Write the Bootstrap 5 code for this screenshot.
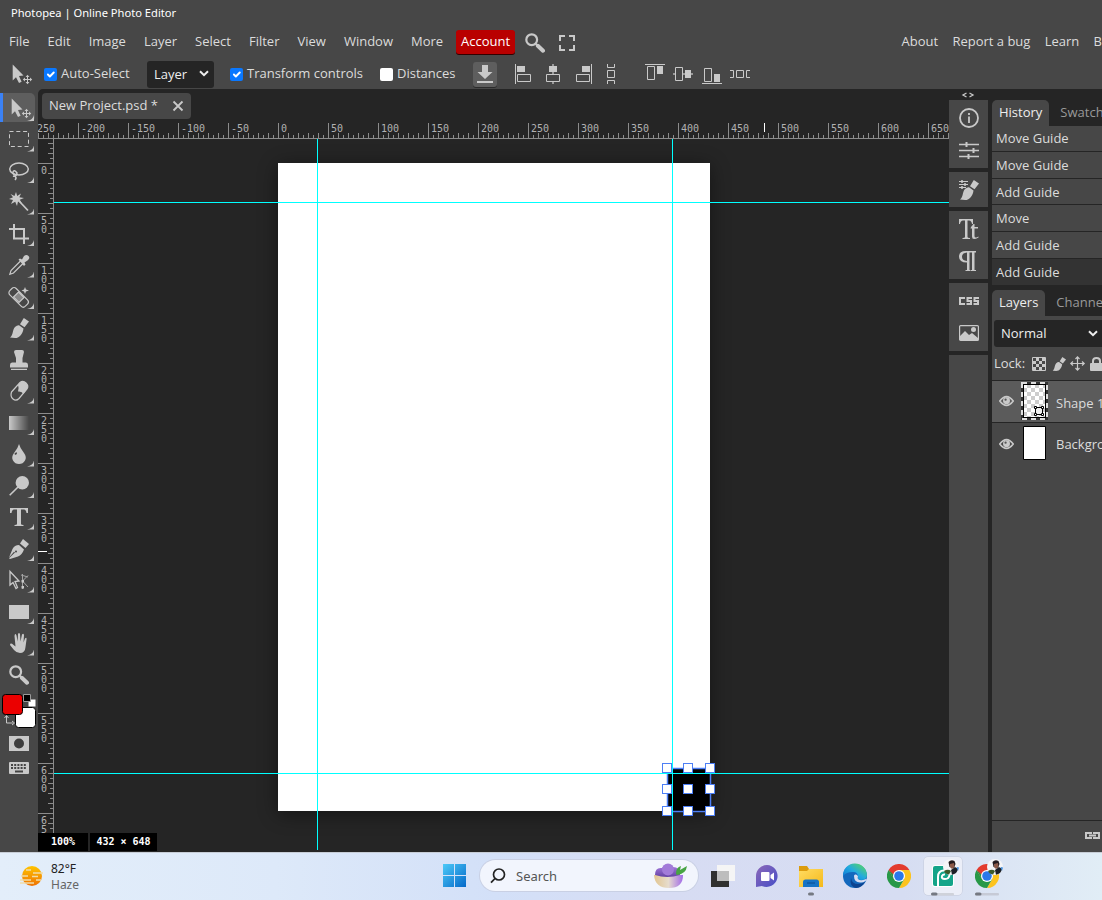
<!DOCTYPE html>
<html lang="en">
<head>
    <meta charset="UTF-8">
    <meta name="viewport" content="width=device-width, initial-scale=1.0">
    <title>Photopea | Online Photo Editor</title>
    <link rel="stylesheet" href="https://cdn.jsdelivr.net/npm/bootstrap@5.3.0/dist/css/bootstrap.min.css">
    <style>
        :root { --base: #474747; --dark: #252525; --ink: #dcdcdc; --icon: #c9c9c9; }
        body {
            width: 1102px;
            height: 900px;
            overflow: hidden;
            background: var(--base);
            color: var(--ink);
            font: 13px/18px "Open Sans", "Noto Sans", sans-serif;
        }
        svg { display: block; flex: none; overflow: visible; }
        .ic { fill: var(--icon); color: var(--icon); }
        .ln { fill: none; stroke: var(--icon); }
        .text-nowrap { flex: none; }

        /* header */
        .title-bar { height: 27px; padding: 4px 11px; color: #fff; font-family: "Noto Sans", sans-serif; font-size: 11.15px; }
        .menu-bar { height: 30px; padding-left: 9px; }
        .menu-bar .nav-link { padding: 0 0 2px; margin-right: 18px; color: var(--ink); }
        .menu-bar .info-link { margin-right: 14.3px; }
        .menu-bar .account { width: 59px; height: 24px; margin: 0 10px 0 -5px; padding: 2px 0; border-radius: 3px; background: #b90000; color: #fff; text-align: center; box-shadow: 0 1px 0 #300; }
        .options-bar { height: 32px; padding: 2px 0 0 12px; }
        .options-bar .form-check-input { flex: none; width: 13px; height: 13px; margin: 1px 4px 0 0; border: 0; border-radius: 2px; background-size: 13px; }
        .options-bar .form-check-input:checked { background-color: #0a78ff; }
        .options-bar label { flex: none; margin-top: -2px; white-space: nowrap; }
        .picker { flex: none; height: 27px; padding-bottom: 1px; border-radius: 3px; background-color: var(--dark); color: #eee; }
        .snap-btn { flex: none; width: 24px; height: 25px; border-radius: 3px; background: #5e5e5e; box-shadow: 0 1px 0 #2b2b2b; }

        /* left tools */
        .tool-bar { width: 38px; padding-top: 4px; }
        .tool { position: relative; width: 38px; height: 31.5px; flex: none; display: flex; justify-content: center; align-items: center; }
        .tool.more::after { content: ""; position: absolute; left: 27px; top: 22px; width: 7px; height: 6px; background: var(--icon); clip-path: path("M7 0V6H0Q6 5 7 0Z"); }
        .tool.on { width: 35px; height: 29px; margin-bottom: 1.5px; padding-left: 3px; border-left: 3px solid #3b82f6; border-radius: 0 5px 5px 0; background: #5e5e5e; }
        .tool.on::after { left: 24px; }

        /* document */
        .doc-area { background: var(--dark); border-radius: 5px 0 0 0; min-width: 0; }
        .doc-tab { width: 149px; height: 26px; margin: 4px 0 4px 4px; padding: 0 8px 2px 7px; border-radius: 4px; background: var(--base); }
        .doc-tab svg { margin-top: 1px; }
        .ruler text { font: 10px "DejaVu Sans Mono", monospace; fill: #b2b2b2; }
        .board { position: relative; overflow: hidden; }
        .sheet { position: absolute; left: 224px; top: 24px; width: 432px; height: 648px; background: #fff; box-shadow: 0 3px 18px rgba(0,0,0,.45); }
        .guides { position: absolute; left: 0; top: 0; }
        .status-line { position: absolute; left: 0; bottom: 1px; }
        .status-line span { height: 18px; background: #000; color: #fff; font: bold 10px/18px "DejaVu Sans Mono", monospace; text-align: center; white-space: pre; }

        /* right side */
        .icon-strip { width: 39px; background: var(--dark); }
        .strip-box { background: var(--base); }
        .side { width: 114px; padding-left: 4px; background: var(--dark); overflow: hidden; }
        .side-tab { height: 26px; padding: 3px 7px; border-radius: 5px 5px 0 0; color: #999; white-space: nowrap; }
        .side-tab.on { background: var(--base); color: #eee; }
        .history-item { height: 26.67px; padding: 4px 4px; border-bottom: 1.4px solid var(--dark); background: var(--base); }
        .history-item:first-child { height: 26px; padding-top: 3px; }
        .history-item:last-child { background: #333; border: 0; }
        .layer-row { height: 42px; padding: 0 0 1px 7px; background: var(--base); }
        .layer-row.on { background: #5b5b5b; border-bottom: 1px solid var(--dark); border-top: 1px solid var(--dark); height: 43px; }

        /* taskbar */
        .task-bar { height: 48px; padding-bottom: 2px; color: #222; background: linear-gradient(90deg, #e3eefa 0, #dde9f9 25%, #d3e0f8 45%, #d7dcf3 60%, #d6ddf2 82%, #e1edf6 100%); font: 12px/16px "Noto Sans", sans-serif; border-top: 1px solid #c7cdd6; }
        .find-box { width: 218px; height: 31px; margin-left: 14px; padding: 0 10px; border-radius: 16px; background: #f2f5fd; box-shadow: 0 0 0 1px #c9d0e4; font-size: 13px; color: #555; }
        .app-slot { position: relative; width: 44.1px; height: 38px; display: flex; justify-content: center; align-items: center; }
        .app-slot.on::before { content: ""; position: absolute; inset: 0 3px; border-radius: 4px; background: #ebeef8; box-shadow: 0 0 0 .5px #c4c9da; }
        .app-slot svg { position: relative; }
    </style>
</head>
<body class="d-flex flex-column">

<!-- shared symbols -->
<svg width="0" height="0" class="position-absolute">
    <defs>
        <linearGradient id="gFade"><stop offset="0" stop-color="#c9c9c9"/><stop offset="1" stop-color="#474747"/></linearGradient>
        <linearGradient id="gWin" x2="1" y2="1"><stop offset="0" stop-color="#4cc9f8"/><stop offset="1" stop-color="#0569c9"/></linearGradient>
        <linearGradient id="gSun" y2="1" x2="0"><stop offset="0" stop-color="#ffc400"/><stop offset="1" stop-color="#ee7203"/></linearGradient>
        <linearGradient id="gChat" y2="1" x2="1"><stop offset="0" stop-color="#8c68b8"/><stop offset="1" stop-color="#464ec7"/></linearGradient>
        <linearGradient id="gFold" y2="1" x2="1"><stop offset="0" stop-color="#ffdc62"/><stop offset="1" stop-color="#f5b91b"/></linearGradient>
        <linearGradient id="gEdge" y1="1" x2="1" y2="0"><stop offset="0" stop-color="#0b6ed0"/><stop offset=".5" stop-color="#22a9e0"/><stop offset="1" stop-color="#63e04a"/></linearGradient>
        <linearGradient id="gBowl"><stop offset="0" stop-color="#e2c590"/><stop offset=".5" stop-color="#e6dccd"/><stop offset="1" stop-color="#a16ae8"/></linearGradient>
        <linearGradient id="gBerry" x2="0" y2="1"><stop offset="0" stop-color="#b184e8"/><stop offset="1" stop-color="#6442a4"/></linearGradient>
        <symbol id="move" viewBox="0 0 20 20" overflow="visible">
            <path d="M.7 .5V16.500L4 13.200L7 19L9.600 17.700L7 12L11.500 11.500Z"/>
            <path d="M15.500 12V19M12 15.500H19" stroke="currentColor"/>
            <path d="M15.500 10.800l1.900 2.200h-3.800zM15.500 20.200l1.900-2.200h-3.800zM10.800 15.500l2.200-1.900v3.800zM20.200 15.500l-2.200-1.900v3.800z"/>
        </symbol>
        <symbol id="lens" viewBox="0 0 20 20"><circle cx="6.700" cy="6.700" r="5.400" fill="none" stroke="currentColor" stroke-width="2.200"/><path d="M10.500 10.500L12 12" stroke="currentColor" stroke-width="2"/><path d="M12.800 12.800L18 17.700" stroke="currentColor" stroke-width="4" stroke-linecap="round"/></symbol>
        <symbol id="brush" viewBox="0 0 20 20"><path d="M14.800 0L20 3.600L15.500 9.300L11 6.200Z"/><path d="M10 7.200L14.500 10.400C14 15 11 20 6 20L1 19.600C4.500 17 3 12.500 6 9Q8 7 10 7.200Z"/></symbol>
        <symbol id="chev" viewBox="0 0 10 7"><path d="M1 1.200L5 5.200L9 1.200" fill="none" stroke="#eee" stroke-width="2"/></symbol>
        <symbol id="eye" viewBox="0 0 16 12"><path d="M.8 6Q8-3.400 15.200 6Q8 15.400 .8 6Z" fill="none" stroke="currentColor" stroke-width="1.700"/><circle cx="8" cy="5.800" r="3.700"/><circle cx="7" cy="4.600" r="1.200" fill="#555"/></symbol>
        <symbol id="chrome" viewBox="0 0 24 24">
            <path d="M1.600 6A12 12 0 0 1 22.400 6H12Z" fill="#e33b2e"/><path d="M22.400 6A12 12 0 0 1 12 24L17.200 15L12 6Z" fill="#fcc31e"/><path d="M1.600 6A12 12 0 0 0 12 24L17.200 15H7Z" fill="#279847"/><path d="M1.600 6L7 15L12 6Z" fill="#e33b2e"/><path d="M1.600 6L6.800 15L8 12Z" fill="#279847"/>
            <circle cx="12" cy="12" r="6" fill="#fff"/><circle cx="12" cy="12" r="4.800" fill="#2b78ea"/>
        </symbol>
        <symbol id="face" viewBox="0 0 16 16"><circle cx="8" cy="8" r="8" fill="#f5f5f7"/><path d="M5.500 3Q8 0 11.500 2L12.500 5L11 9L6.500 8Z" fill="#241b1e"/><path d="M7 5L11 4L11.500 8L9 10L7 8Z" fill="#8c5a48"/><path d="M1 12Q5 9.500 8 12L6 15.500Q2 15 1 12Z" fill="#3d5a2c"/><path d="M8 11L12 8L15 10Q14 15 9 15.700Z" fill="#1c2027"/><path d="M13.500 8L16 8.500L15 12Z" fill="#3f8ee0"/></symbol>
    </defs>
</svg>

<div class="title-bar">Photopea | Online Photo Editor</div>

<nav class="menu-bar d-flex align-items-center">
    <a class="nav-link">File</a><a class="nav-link">Edit</a><a class="nav-link">Image</a><a class="nav-link">Layer</a>
    <a class="nav-link">Select</a><a class="nav-link">Filter</a><a class="nav-link">View</a><a class="nav-link">Window</a>
    <a class="nav-link">More</a>
    <a class="nav-link account">Account</a>
    <svg class="ic" style="margin-top:2px" width="20" height="20"><use href="#lens"/></svg>
    <svg class="ln" style="margin:2px auto 0 14px" width="16" height="16" stroke-width="2"><path d="M1 6V1H6M10 1H15V6M15 10V15H10M6 15H1V10"/></svg>
    <a class="nav-link info-link">About</a><a class="nav-link info-link text-nowrap">Report a bug</a><a class="nav-link info-link">Learn</a>
    <a class="nav-link m-0 text-nowrap">B</a>
</nav>

<div class="options-bar d-flex align-items-center">
    <svg class="ic" width="20" height="20"><use href="#move"/></svg>
    <input class="form-check-input" style="margin-left:12px" type="checkbox" id="auto" checked><label for="auto" style="width:86px">Auto-Select</label>
    <div class="picker d-flex align-items-center justify-content-between" style="width:67px;padding:0 5px 1px 7px">Layer<svg width="10" height="7"><use href="#chev"/></svg></div>
    <input class="form-check-input" style="margin-left:16px" type="checkbox" id="trans" checked><label for="trans" style="width:133px">Transform controls</label>
    <input class="form-check-input" type="checkbox" id="dist"><label for="dist" style="width:76px">Distances</label>
    <div class="snap-btn d-flex align-items-center justify-content-center"><svg class="ic" width="16" height="19"><path d="M5 0H11V7H15.500L8 14L.5 7H5ZM0 16H16V18H0Z"/></svg></div>
    <svg class="ln" style="margin-left:18px" width="20" height="20"><path d="M.5 0V20M2.500 10.500H15.500V17.500H2.500Z"/><path class="ic" stroke="none" d="M2 2H10V8H2Z"/></svg>
    <svg class="ln" style="margin-left:8px" width="20" height="20"><path d="M10 0V10M10 18V20" stroke="#999" stroke-width="2"/><path d="M3.500 10.500H16.500V17.500H3.500Z"/><path class="ic" stroke="none" d="M6 2H14V8H6Z"/></svg>
    <svg class="ln" style="margin-left:10px" width="20" height="20"><path d="M18.500 0V20M3.500 10.500H16.500V17.500H3.500Z"/><path class="ic" stroke="none" d="M9 2H17V8H9Z"/></svg>
    <svg class="ln" style="margin-left:14px" width="8" height="20"><path d="M.5 0V3.500H7.500V0M.5 20V16.500H7.500V20M.5 6.500H7.500V13.500H.5Z"/></svg>
    <svg class="ln" style="margin-left:30px" width="20" height="20"><path d="M0 .5H20M2.500 2.500H9.500V15.500H2.500Z"/><path class="ic" stroke="none" d="M12 2H18V10H12Z"/></svg>
    <svg class="ln" style="margin-left:8px" width="20" height="20"><path d="M0 10H2M10 10H20" stroke="#999" stroke-width="2"/><path d="M2.500 3.500H9.500V16.500H2.500Z"/><path class="ic" stroke="none" d="M12 6H18V14H12Z"/></svg>
    <svg class="ln" style="margin-left:9px" width="20" height="20"><path d="M0 19.500H20M2.500 4.500H9.500V17.500H2.500Z"/><path class="ic" stroke="none" d="M12 10H18V18H12Z"/></svg>
    <svg class="ln" style="margin-left:8px" width="20" height="8"><path d="M0 .5H3.500V7.500H0M20 .5H16.500V7.500H20M6.500 .5H13.500V7.500H6.500Z"/></svg>
</div>

<main class="d-flex" style="height:763px">
    <aside class="tool-bar d-flex flex-column">
        <div class="tool more on"><svg class="ic" width="20" height="20"><use href="#move"/></svg></div>
        <div class="tool more"><svg class="ln" width="20" height="16"><rect x=".5" y=".5" width="19" height="15" stroke-dasharray="4 2.800"/></svg></div>
        <div class="tool more"><svg class="ln" width="20" height="20" stroke-width="1.500"><ellipse cx="10" cy="8" rx="9.300" ry="6"/><path d="M8 14Q3 14 4 11T8 12Q7 16 4 15M6 15Q8 17 6 19"/></svg></div>
        <div class="tool more"><svg class="ic" width="20" height="20"><path d="M7 0L8.200 4L12 1.500L10.300 5.300L15 6L10.800 7.800L13 11.500L9 9.500L8 14L6.200 9.700L2 12L4 8L0 7L4 5.200L1.500 2L5.500 4Z"/><path d="M10 9L19 18.500" stroke="#c9c9c9" stroke-width="1.800"/></svg></div>
        <div class="tool more"><svg class="ln" width="20" height="20" stroke-width="2"><path d="M5 0V14.500H20M0 5H15V20"/></svg></div>
        <div class="tool more"><svg class="ln" width="20" height="20" stroke-width="1.200"><path d="M11.500 6L2 15.500L.8 19.200L4.500 18L14 8.500"/><path class="ic" stroke="none" d="M9.500 4.500L11 3.500L13 4.500L15 1Q17.500-1 19.500 1T18.500 5.500L15.500 7.500L16.500 9.500L15 11Z"/></svg></div>
        <div class="tool more"><svg class="ln" width="20" height="20" stroke-width="1.200"><rect x="-1" y="6" width="22" height="9" rx="3" transform="rotate(45 10 10)"/><path class="ic" d="M9.500 5L15 10.500L10 15.500L4.500 10Z" fill-opacity=".5"/><path class="ic" stroke="none" d="M16 0L17 2.500L20 3.500L17 4.500L16 7L15 4.500L12.500 3.500L15 2.500Z"/></svg></div>
        <div class="tool more"><svg class="ic" width="20" height="20"><use href="#brush"/></svg></div>
        <div class="tool"><svg class="ic" width="20" height="20"><path d="M5 2Q5 0 7 0H13Q15 0 15 2L13.500 8V12.500H17Q19 12.500 19 15V17.500H1V15Q1 12.500 3 12.500H7V8ZM2 18.800H18V20H2Z"/></svg></div>
        <div class="tool more"><svg class="ln" width="20" height="20" stroke-width="1.200"><path d="M2.500 11L11 1.500Q14-1 17 2T18 8L10 17.500Q7 20.500 4 18T2.500 11Z"/><path class="ic" stroke="none" d="M9 4L11 1.500Q14-1 17 2T18 8L14.500 13Q13 10 9 10.500Q10 6 9 4Z"/></svg></div>
        <div class="tool more"><svg width="20" height="14"><path fill="url(#gFade)" d="M0 0H20V14H0Z"/></svg></div>
        <div class="tool more"><svg class="ic" width="20" height="20"><path d="M10 0Q11 4 15 9Q18 13 16 16.500T10 20T4 16.500T5 9Q9 4 10 0Z"/><path d="M5.500 9.500l2-1.500.5 2-2 1z" fill="#474747"/></svg></div>
        <div class="tool more"><svg class="ic" width="20" height="20"><circle cx="13.300" cy="6.700" r="6.700"/><path d="M9 11L.7 19.300" stroke="#c9c9c9" stroke-width="1.600"/></svg></div>
        <div class="tool more"><svg class="ic" width="20" height="20"><path d="M1 1H19V6H17.500Q17 2.500 15 2.500H12V17Q12 18 14.500 18V19H5.500V18Q8 18 8 17V2.500H5Q3 2.500 2.500 6H1Z"/></svg></div>
        <div class="tool more"><svg class="ic" width="20" height="20"><path d="M14 0L20 5L16.500 9L11 4.500Z"/><path d="M10 6L15 10.500Q13 16 9 17.500L1 20L0 19.300L6 13.500L5 12.800L0 18.500L3.500 10Q5.500 6 10 6Z"/><circle cx="7" cy="12.500" r="1" fill="#474747"/></svg></div>
        <div class="tool more"><svg class="ln" width="20" height="20"><path stroke-width="1.300" d="M1 1.500V15L4 12.500L7 18.500L8.500 17.500L6 11.500L10 11Z"/><path stroke="#a5a5a5" d="M13.500 4V19M12 5L19 7M13.500 11L19 5.500M13.500 11L19 17"/><path class="ic" stroke="none" d="M12.500 10h2.500v2.500h-2.500zM12.500 16h2.500v2.500h-2.500z"/></svg></div>
        <div class="tool more"><svg class="ic" width="20" height="14"><path d="M0 0H20V14H0Z"/></svg></div>
        <div class="tool more"><svg class="ic" width="20" height="20"><path d="M5.500 3Q6-.5 7.500 2.500L8.700 8.500L9 1Q10-1 11 1L11.500 8.500L13 1.500Q14.500 0 15 2L14.500 9.500L16 5.500Q17.500 4 17.600 6L16.500 14Q16 20 11 20Q7.500 20 5 17L1 12Q1 10 3 10.700L6.500 13.500Z"/></svg></div>
        <div class="tool"><svg class="ic" width="20" height="20"><use href="#lens"/></svg></div>
        <svg width="38" height="40">
            <rect x="15.500" y="16.500" width="20" height="20" rx="3" fill="#fff" stroke="#000"/><rect x="2.500" y="3.500" width="20" height="20" rx="3" fill="#eb0000" stroke="#000"/>
            <path d="M28.500 8.500h7v7h-7z" fill="#fff"/><path d="M23.500 3.500h7v7h-7z" fill="#000" stroke="#999"/>
            <path d="M6.500 25V32H13M4.500 27L6.500 24.500L8.500 27M12 30L14.500 32L12 34" class="ln"/>
        </svg>
        <svg class="ic" style="margin:5px 9px 11px" width="20" height="15"><path d="M0 0H20V15H0Z"/><circle cx="10" cy="7.500" r="5" fill="#3e3e3e"/></svg>
        <svg class="ic" style="margin-left:9px" width="20" height="12"><rect width="20" height="12" rx="1"/><path d="M2 3H18M2 6H18" stroke="#444" stroke-width="2" stroke-dasharray="2 1.200"/><path d="M6 9.500H14" stroke="#444" stroke-width="2"/></svg>
    </aside>

    <section class="doc-area d-flex flex-column flex-grow-1">
        <div class="doc-tab d-flex align-items-center justify-content-between flex-shrink-0">New Project.psd *<svg class="ln" width="10" height="10" stroke-width="1.800"><path d="M.5 .5L9.500 9.500M9.500 .5L.5 9.500"/></svg></div>
        <svg id="rulerTop" class="ruler overflow-hidden" width="911" height="16"></svg>
        <div class="d-flex flex-grow-1 position-relative">
            <svg id="rulerLeft" class="ruler overflow-hidden" width="16" height="712"></svg>
            <div class="board flex-grow-1">
                <div class="sheet"></div>
                <svg class="guides" width="895" height="712">
                    <path d="M613.500 629.500H656.500V672.500H613.500Z" fill="#000" stroke="#4d7ff5" stroke-width="1.500"/>
                    <path d="M0 63.500H895M0 634.500H895M263.500 0V711M618.500 0V711" stroke="#0ff"/>
                    <g id="handles" fill="#fff" stroke="#4d7ff5"></g>
                </svg>
            </div>
            <!-- zoom level and document size -->
            <div class="status-line d-flex" style="gap:2px"><span style="width:50px">100%</span><span style="width:67px">432 × 648</span></div>
        </div>
    </section>

    <aside class="icon-strip d-flex flex-column flex-shrink-0">
        <svg class="ln" style="margin:4px 0 3px 13px" width="12" height="4" stroke-width="1.300"><path d="M4.500 0L1 2L4.500 4M7.500 0L11 2L7.500 4"/></svg>
        <div class="strip-box d-flex flex-column align-items-center" style="height:68px;padding-top:8px;gap:14px;margin-bottom:4px">
            <svg class="ln" width="20" height="20" stroke-width="1.800"><circle cx="10" cy="10" r="9"/><path d="M10 8.500V15M10 5V7"/></svg>
            <svg class="ln" width="20" height="17" stroke-width="2"><path d="M0 2.500H20M0 8.500H20M0 14.500H20" stroke-width="1.500"/><path d="M7.500 0V5M14.500 6V11M9.500 12V17"/></svg>
        </div>
        <div class="strip-box d-flex justify-content-center" style="height:35px;padding-top:8px;margin-bottom:4px">
            <svg class="ic" width="20" height="20"><use href="#brush"/><path d="M0 1.500H9M0 4.500H9M0 7.500H7" stroke="#c9c9c9"/><path d="M3 0V3M6 3V6M3 6V9" stroke="#c9c9c9" stroke-width="1.500"/></svg>
        </div>
        <div class="strip-box d-flex flex-column align-items-center" style="height:68px;padding-top:8px;gap:12px;margin-bottom:4px">
            <svg class="ic" width="20" height="20"><path d="M0 0H14V5H13Q12.500 1.500 10 1.500H8.500V18Q8.500 19 11 19V20H3.500V19Q6 19 6 18V1.500H4Q1.500 1.500 1 5H0ZM12 8L14.500 5H15.500V8H19V9.500H15.500V17Q15.500 19 17.500 18.500L19.500 17.500V18.500Q13 22 13 17.500V9.500H11.500Z"/></svg>
            <svg class="ic" width="20" height="20"><path d="M7 0H17V1.500H15.500V19H17V20H12V19H13V1.500H10.500V19H11.500V20H6.500V19H8V11.500Q0 11.500 0 5.700T7 0ZM8 1.500Q3 2 3 5.700T8 10Z" fill-rule="evenodd"/><path d="M8.500 1H10V19H8.500Z"/></svg>
        </div>
        <div class="strip-box d-flex flex-column align-items-center" style="height:68px;padding-top:14px;gap:20px;margin-bottom:4px">
            <svg class="ln" width="20" height="8" stroke-width="2"><path d="M6 1H1V7H6M13 1H8.500V4H12V7H7.500M20 1H15.500V4H19V7H14.500"/></svg>
            <svg class="ln" width="20" height="16" stroke-width="1.200"><rect x=".6" y=".6" width="18.800" height="14.800" rx="1"/><path class="ic" stroke="none" d="M1 14V11L6 6L10 10L13 8L19 13V15H1Z"/><circle class="ic" stroke="none" cx="14.500" cy="4.500" r="2.500"/></svg>
        </div>
        <div class="strip-box flex-grow-1"></div>
    </aside>

    <aside class="side d-flex flex-column flex-shrink-0" style="padding-top:11px">
        <div class="d-flex"><div class="side-tab on">History</div><div class="side-tab" style="padding-left:11px">Swatches</div></div>
        <div id="historyList" style="height:159px;margin-bottom:5px"></div>
        <div class="d-flex"><div class="side-tab on">Layers</div><div class="side-tab" style="padding-left:11px">Channels</div></div>
        <div class="strip-box" style="padding:4px 0 0 2px;height:64px">
            <div class="picker d-flex align-items-center" style="width:130px;padding-left:7px"><span style="width:87px">Normal</span><svg width="10" height="7"><use href="#chev"/></svg></div>
            <div class="d-flex align-items-center" style="height:33px;width:130px">
                <span style="width:38px;margin-top:-2px">Lock:</span>
                <svg class="ic" width="14" height="14"><path class="ln" d="M.5 .5H13.500V13.500H.5Z"/><path d="M4 1h3v3h-3zM10 1h3v3h-3zM1 4h3v3h-3zM7 4h3v3h-3zM4 7h3v3h-3zM10 7h3v3h-3zM1 10h3v3h-3zM7 10h3v3h-3z"/></svg>
                <svg class="ic" style="margin-left:6px" width="14" height="14"><use href="#brush"/></svg>
                <svg class="ln" style="margin-left:4px" width="15" height="15" stroke-width="1.200"><path d="M7.500 1V14M1 7.500H14M5.500 3L7.500 .8L9.500 3M5.500 12L7.500 14.200L9.500 12M3 5.500L.8 7.500L3 9.500M12 5.500L14.200 7.500L12 9.500"/></svg>
                <svg class="ic" style="margin-left:5px" width="13" height="14"><rect y="6" width="13" height="8" rx="1"/><path d="M3 7V4Q3 1 6.500 1T10 4V7" class="ln" stroke-width="2"/></svg>
            </div>
        </div>
        <div class="layer-row on d-flex align-items-center">
            <svg class="ic" width="15" height="12"><use href="#eye"/></svg>
            <svg style="margin:0 8px 0 7px" width="27" height="38">
                <defs><pattern id="chk" width="8" height="8" patternUnits="userSpaceOnUse" x="2" y="2"><path fill="#fff" d="M0 0H8V8H0Z"/><path fill="#ccc" d="M4 0h4v4h-4zM0 4h4v4h-4z"/></pattern></defs>
                <rect width="27" height="38" fill="#333"/><rect x="1" y="1" width="25" height="36" fill="none" stroke="#ddd" stroke-width="2" stroke-dasharray="5 4"/>
                <rect x="2.500" y="2.500" width="22" height="33" fill="url(#chk)" stroke="#000"/>
                <path d="M14.500 25.500H21.500V32.500H14.500Z" fill="#eee" stroke="#000"/><path d="M13.500 24.500h2v2h-2zM20.500 24.500h2v2h-2zM13.500 31.500h2v2h-2zM20.500 31.500h2v2h-2z" fill="#fff" stroke="#000"/>
            </svg>
            <span class="text-nowrap pt-1">Shape 1</span>
        </div>
        <div class="layer-row d-flex align-items-center">
            <svg class="ic" width="15" height="12"><use href="#eye"/></svg>
            <svg style="margin:-1px 10px 0 9px" width="23" height="34"><path d="M.5 .5H22.500V33.500H.5Z" fill="#fff" stroke="#000"/></svg>
            <span class="text-nowrap" style="padding-top:1px">Background</span>
        </div>
        <div class="strip-box flex-grow-1"></div>
        <div class="strip-box d-flex justify-content-end" style="height:32px;border-top:1px solid var(--dark);padding:11px 2px 0 0">
            <svg class="ln" width="15" height="7" stroke-width="2"><path d="M6 2V1H1V6H6V5M9 2V1H14V6H9V5M4 3.500H11"/></svg>
        </div>
    </aside>
</main>

<footer class="task-bar d-flex align-items-center flex-shrink-0">
    <svg style="margin:0 8px 0 20px" width="23" height="20"><circle cx="12" cy="10" r="10" fill="url(#gSun)"/><path d="M6 4H11M13 7H23M1 10H8M12 10.500H18M0 14H11M0 17H14M16 14H21" stroke="#f1dca8" stroke-width="1.500"/></svg>
    <div style="width:392px;margin-top:2px"><div>82°F</div><div style="color:#666">Haze</div></div>
    <svg width="23" height="23"><path fill="url(#gWin)" d="M0 0H11V11H0ZM12 0H23V11H12ZM0 12H11V23H0ZM12 12H23V23H12Z"/></svg>
    <div class="find-box d-flex align-items-center">
        <svg width="16" height="16" fill="none" stroke="#222" stroke-width="1.700"><circle cx="9" cy="6.500" r="5.500"/><path d="M5 10.500L1 14.700"/></svg>
        <span class="me-auto" style="margin-left:10px">Search</span>
        <svg width="35" height="25">
            <path d="M1 12H30Q30 25 16 25T1 12Z" fill="url(#gBowl)"/><path d="M2 12Q2 4 9 5Q14-2 20 4Q27 4 27 12Q14 16 2 12Z" fill="url(#gBerry)"/><circle cx="15" cy="6.500" r="6" fill="#a27bd9"/><path d="M23 11Q23 4 28 3L27 7L34 3Q33 11 24 12Z" fill="#47a443"/>
        </svg>
    </div>
    <div class="d-flex" style="margin-left:2.500px">
        <div class="app-slot"><svg width="24" height="22"><path fill="#303030" d="M0 6H18V22H0Z"/><path fill="#f5f5f5" d="M6 0H24V16H6Z"/><path fill="#bdbdbd" d="M6 6H18V16H6Z"/></svg></div>
        <div class="app-slot"><svg width="24" height="24"><path fill="url(#gChat)" d="M12 1A11 11 0 1 1 7 22L1 23V12A11 11 0 0 1 12 1Z"/><rect x="6" y="8" width="8.500" height="9" rx="1" fill="#fff"/><path d="M15.500 11L19 8.500V16.500L15.500 14Z" fill="#fff"/></svg></div>
        <div class="app-slot"><svg width="24" height="24"><path fill="#dc9c0e" d="M0 2H8L10 5H24V8H0Z"/><path fill="url(#gFold)" d="M0 7H8L10 5H24V23H0Z"/><path fill="#1673c5" d="M4 23V18Q4 15.500 6.500 15.500H17.500Q20 15.500 20 18V23Z"/><path d="M8 19H16" stroke="#0b4d90"/><rect x="9" y="28.500" width="6" height="3" rx="1.500" fill="#757982"/></svg></div>
        <div class="app-slot"><svg width="24" height="24"><circle cx="12" cy="12" r="12" fill="#1368bd"/><path fill="url(#gEdge)" d="M0 12A12 12 0 0 1 24 11Q24 16 18 16Q14 16 15 13Q15 8 10 8Q3 8 0 12Z"/><path fill="#0c4390" d="M8 14Q9 20 15 20Q19 20 22 17.500Q19 24 13 24Q6 22 8 14Z"/><path fill="#d6ddf2" d="M11 12Q11 18 17 18.500Q20 19 22.500 17Q24.500 15 23 15Q16 18 14.500 14Q16 12 13 10.500Q11 10 11 12Z"/></svg></div>
        <div class="app-slot"><svg width="24" height="24"><use href="#chrome"/></svg></div>
        <div class="app-slot on"><svg width="24" height="24"><rect x="1" y="1" width="22" height="22" rx="3" fill="#fff"/><rect x="2" y="2" width="20" height="20" rx="2" fill="#14a489"/><path d="M7 22V13Q7 6.500 13 6.500T18.500 11Q18 15 14 15T11 12Q12 10 14 10.500" fill="none" stroke="#fff" stroke-width="2"/><use href="#face" x="12" y="-5" width="16" height="16"/><rect x="0" y="29" width="23" height="2.500" rx="1" fill="#cfd2da"/><rect x="0" y="28.500" width="6.500" height="3" rx="1.500" fill="#757982"/></svg></div>
        <div class="app-slot"><svg width="24" height="24"><use href="#chrome" width="24" height="24"/><use href="#face" x="12" y="-5" width="16" height="16"/><rect x="0" y="29" width="24" height="2.500" rx="1" fill="#c6cad6"/><rect x="0" y="28.500" width="6.500" height="3" rx="1.500" fill="#757982"/></svg></div>
    </div>
</footer>

<script src="https://cdn.jsdelivr.net/npm/bootstrap@5.3.0/dist/js/bootstrap.bundle.min.js"></script>
<script>
    // rulers: a tick every 5 units, a label every 50
    function drawTopRuler() {
        let out = `<path d="M0 15.500H911" stroke="#8c8c8c"/>`;
        for (let v = -250; v <= 670; v += 5) {
            const x = v + 240.5;
            const len = v % 50 === 0 ? 15 : v % 10 === 0 ? 5 : 3;
            out += `<path d="M${x} ${15 - len}V15" stroke="#8c8c8c"/>`;
            if (v % 50 === 0) out += `<text x="${x + 2.5}" y="9">${v}</text>`;
        }
        out += `<path d="M726.500 0V9" stroke="#fff"/>`;
        document.getElementById("rulerTop").innerHTML = out;
    }

    function drawLeftRuler() {
        let out = `<path d="M15.500 0V694" stroke="#8c8c8c"/>`;
        for (let v = -20; v <= 665; v += 5) {
            const y = v + 24.5;
            const len = v % 50 === 0 ? 15 : v % 10 === 0 ? 5 : 3;
            out += `<path d="M${15 - len} ${y}H15" stroke="#8c8c8c"/>`;
            if (v % 50 === 0) {
                String(v).split("").forEach((d, i) => {
                    out += `<text x="3" y="${y + 10.5 + i * 9}">${d}</text>`;
                });
            }
        }
        out += `<path d="M0 412.500H9" stroke="#fff"/>`;
        document.getElementById("rulerLeft").innerHTML = out;
    }

    // eight resize handles and the centre one
    function drawHandles() {
        let out = "";
        [613, 634, 656].forEach(x => [629, 650, 672].forEach(y => {
            out += `<rect x="${x - 4.5}" y="${y - 4.5}" width="9" height="9"/>`;
        }));
        document.getElementById("handles").innerHTML = out;
    }

    const steps = ["Move Guide", "Move Guide", "Add Guide", "Move", "Add Guide", "Add Guide"];
    document.getElementById("historyList").innerHTML = steps.map(s => `<div class="history-item">${s}</div>`).join("");

    drawTopRuler();
    drawLeftRuler();
    drawHandles();
</script>
</body>
</html>
